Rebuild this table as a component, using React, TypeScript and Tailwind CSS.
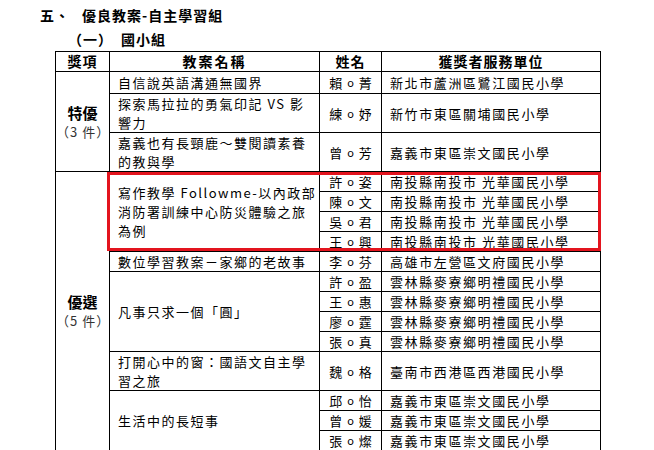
import React from "react";

type Member = { name: string; unit: string; h: number };
type Entry = { title: React.ReactNode; members: Member[] };
type Group = { label: string; count: string; entries: Entry[] };

const NANTOU = "南投縣南投市 光華國民小學";
const YUNLIN = "雲林縣麥寮鄉明禮國民小學";
const CHIAYI = "嘉義市東區崇文國民小學";

const GROUPS: Group[] = [
  {
    label: "特優",
    count: "（3 件）",
    entries: [
      { title: "自信說英語溝通無國界", members: [{ name: "賴o菁", unit: "新北市蘆洲區鷺江國民小學", h: 22 }] },
      {
        title: (
          <>
            探索馬拉拉的勇氣印記 VS 影<br />響力
          </>
        ),
        members: [{ name: "練o妤", unit: "新竹市東區關埔國民小學", h: 38 }],
      },
      {
        title: (
          <>
            嘉義也有長頸鹿～雙閱讀素養<br />的教與學
          </>
        ),
        members: [{ name: "曾o芳", unit: CHIAYI, h: 39 }],
      },
    ],
  },
  {
    label: "優選",
    count: "（5 件）",
    entries: [
      {
        title: (
          <>
            寫作教學 Followme-以內政部<br />消防署訓練中心防災體驗之旅<br />為例
          </>
        ),
        members: [
          { name: "許o姿", unit: NANTOU, h: 20 },
          { name: "陳o文", unit: NANTOU, h: 20 },
          { name: "吳o君", unit: NANTOU, h: 20 },
          { name: "王o興", unit: NANTOU, h: 20 },
        ],
      },
      { title: "數位學習教案－家鄉的老故事", members: [{ name: "李o芬", unit: "高雄市左營區文府國民小學", h: 20 }] },
      {
        title: "凡事只求一個「圓」",
        members: [
          { name: "許o盈", unit: YUNLIN, h: 20 },
          { name: "王o惠", unit: YUNLIN, h: 20 },
          { name: "廖o霆", unit: YUNLIN, h: 20 },
          { name: "張o真", unit: YUNLIN, h: 19 },
        ],
      },
      {
        title: (
          <>
            打開心中的窗：國語文自主學<br />習之旅
          </>
        ),
        members: [{ name: "魏o格", unit: "臺南市西港區西港國民小學", h: 39 }],
      },
      {
        title: "生活中的長短事",
        members: [
          { name: "邱o怡", unit: CHIAYI, h: 20 },
          { name: "曾o媛", unit: CHIAYI, h: 19 },
          { name: "張o燦", unit: CHIAYI, h: 20 },
        ],
      },
    ],
  },
];

const cell = "border border-black p-0";

function Name({ value }: { value: string }) {
  // 姓 o 名：中間的 o 較小
  return (
    <span className="inline-flex items-center gap-[5px]">
      <span>{value[0]}</span>
      <span className="text-[11px] leading-none">o</span>
      <span>{value.slice(2)}</span>
    </span>
  );
}

export default function App() {
  return (
    <div className="h-[450px] w-[654px] overflow-hidden bg-white text-black" style={{ fontFamily: '"Noto Sans CJK TC", "Noto Sans", sans-serif' }}>
      {/* 標題 */}
      <div className="flex items-center pl-[40px] pt-[6px] text-[14px] font-bold leading-[18px] tracking-[1px]">
        <span>五、</span>
        <span className="ml-[12px]">優良教案-自主學習組</span>
      </div>
      <div className="mt-[6px] flex items-center pl-[68px] text-[14px] font-bold leading-[18px] tracking-[1px]">
        <span>（一）</span>
        <span className="ml-[8px]">國小組</span>
      </div>

      <div className="relative ml-[55px] mt-[3px] w-[545px]">
        <table className="w-[545px] table-fixed border-collapse text-[13px] leading-[19px]">
          <colgroup>
            <col className="w-[54px]" />
            <col className="w-[210px]" />
            <col className="w-[62px]" />
            <col className="w-[219px]" />
          </colgroup>
          <thead>
            <tr className="h-[20px] text-[14px] font-bold">
              <th className={`${cell} tracking-[1px]`}>獎項</th>
              <th className={`${cell} tracking-[2px]`}>教案名稱</th>
              <th className={`${cell} tracking-[1px]`}>姓名</th>
              <th className={`${cell} tracking-[1px]`}>獲獎者服務單位</th>
            </tr>
          </thead>
          <tbody>
            {GROUPS.map((g) => {
              const total = g.entries.reduce((n, e) => n + e.members.length, 0);
              return g.entries.map((e, ei) =>
                e.members.map((m, mi) => (
                  <tr key={`${g.label}-${ei}-${mi}`} style={{ height: m.h }}>
                    {ei === 0 && mi === 0 && (
                      <td rowSpan={total} className={`${cell} text-center align-middle`}>
                        <div className="text-[15px] font-bold leading-[19px]">{g.label}</div>
                        <div className="whitespace-nowrap text-[13px] leading-[19px] tracking-[1px] text-[#333]">{g.count}</div>
                      </td>
                    )}
                    {mi === 0 && (
                      <td rowSpan={e.members.length} className={`${cell} whitespace-nowrap pl-[8px] align-middle tracking-[1.5px]`}>
                        {e.title}
                      </td>
                    )}
                    <td className={`${cell} whitespace-nowrap text-center`}>
                      <Name value={m.name} />
                    </td>
                    <td className={`${cell} whitespace-nowrap pl-[8px] tracking-[1.6px]`}>{m.unit}</td>
                  </tr>
                ))
              );
            })}
          </tbody>
        </table>
        {/* 紅框標示 */}
        <div className="pointer-events-none absolute left-[52px] top-[121px] h-[79px] w-[494px] border-[3px] border-[#e3141e]" />
      </div>
    </div>
  );
}
